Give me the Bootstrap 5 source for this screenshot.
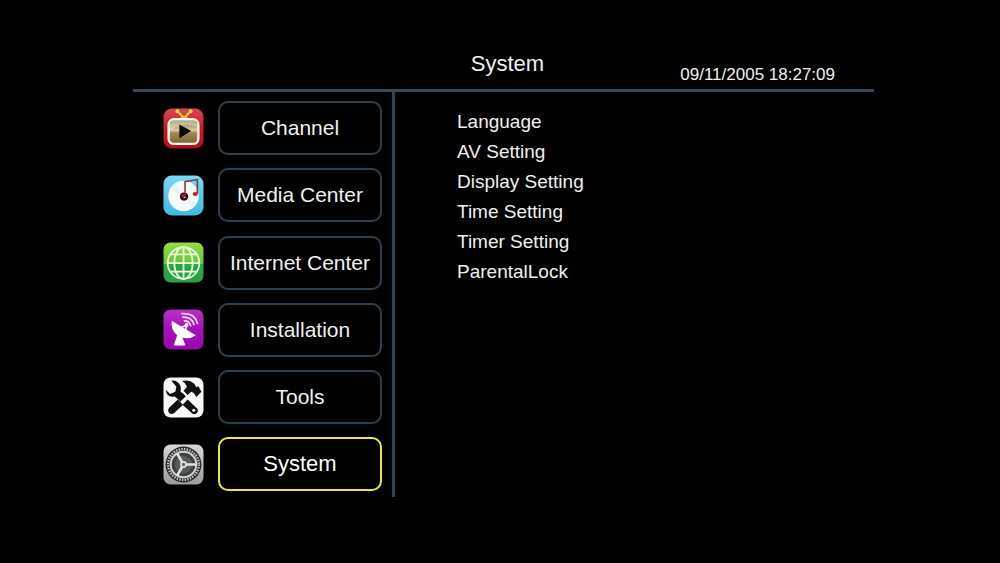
<!DOCTYPE html>
<html lang="en">
<head>
<meta charset="utf-8">
<meta name="viewport" content="width=device-width, initial-scale=1">
<title>System</title>
<link href="https://cdn.jsdelivr.net/npm/bootstrap@5.3.0/dist/css/bootstrap.min.css" rel="stylesheet">
<style>
  body { background: #000; color: #f0f0f0; font-family: "Liberation Sans", Arial, sans-serif; }
  .screen { padding: 50px 12.6% 0 13.3%; }
  .screen-head { border-bottom: 3px solid #344a5a; height: 42px; }
  .screen-title { font-size: 22px; line-height: 28px; padding-left: 8px; }
  .clock { font-size: 17px; line-height: 20px; padding: 15px 39px 0 0; }
  .side-menu { border-right: 3px solid #2e4250; padding: 9px 10px 6px 30px; min-height: 72vh; }
  .entry { gap: 14px; }
  .entry svg { width: 41px; height: 41px; flex: none; }
  .menu-btn { width: 164px; height: 54px; padding: 0; border: 2px solid #2b404b; border-radius: 10px; color: #f0f0f0; font-size: 21px; line-height: 28px; }
  .menu-btn:hover { color: #fff; border-color: #5b7685; }
  .menu-btn.active { background: #000; border-color: #e9e647; color: #fff; font-size: 22px; }
  .options { padding: 15px 0 0 62px; font-size: 19px; line-height: 30px; }
  .options a { color: #f0f0f0; text-decoration: none; }
</style>
</head>
<body>
<main class="screen">
  <header class="screen-head row g-0">
    <h1 class="screen-title col-4 offset-4 text-center fw-normal mb-0">System</h1>
    <time class="clock col-4 text-end text-nowrap" datetime="2005-11-09T18:27:09">09/11/2005 18:27:09</time>
  </header>
  <div class="d-flex">
    <nav class="side-menu d-flex flex-column justify-content-between" aria-label="Main menu">
      <div class="entry d-flex align-items-center">
        <svg viewBox="0 0 40 40" aria-hidden="true">
          <defs>
            <linearGradient id="red" x2="0" y2="1"><stop stop-color="#d84852"/><stop offset=".45" stop-color="#c91d2b"/><stop offset="1" stop-color="#b90c1d"/></linearGradient>
            <linearGradient id="sand" x2="0" y2="1"><stop stop-color="#777044"/><stop offset=".45" stop-color="#d5cca0"/><stop offset=".55" stop-color="#a18a55"/><stop offset="1" stop-color="#77613a"/></linearGradient>
          </defs>
          <rect x=".5" y=".5" width="39" height="39" rx="8" fill="url(#red)"/>
          <path d="M14 3l6.500 7L27 3" fill="none" stroke="#f2c63a" stroke-width="2.200"/>
          <circle cx="14" cy="3" r="1.900" fill="#ffd84b"/><circle cx="27" cy="3" r="1.900" fill="#ffd84b"/>
          <path d="M16 10q4.500-5 9 0z" fill="#f5c52e"/>
          <rect x="5.500" y="11" width="29" height="24" rx="5" fill="url(#sand)" stroke="#fff7ee" stroke-width="2.300"/>
          <path d="M7 23Q17 13 33 18V15Q32 12.500 29 12.500H10Q7 13 7 16z" fill="#eee6c5" opacity=".5"/>
          <path d="M16 16v13.500L27.500 22.500z" fill="#080705"/>
        </svg>
        <button type="button" class="btn menu-btn">Channel</button>
      </div>
      <div class="entry d-flex align-items-center">
        <svg viewBox="0 0 40 40" aria-hidden="true">
          <defs><linearGradient id="sky" x2="0" y2="1"><stop stop-color="#75dbf3"/><stop offset="1" stop-color="#41b9df"/></linearGradient></defs>
          <rect x=".5" y=".5" width="39" height="39" rx="8" fill="url(#sky)"/>
          <circle cx="20" cy="20.500" r="14.800" fill="#f8fafa"/>
          <path d="M20 20.500L7 13.500A15 15 0 0 1 12 8zM20 20.500l13 7a15 15 0 0 1-5 5.500z" fill="#edf3f4"/>
          <circle cx="20.500" cy="21" r="4" fill="#211015"/><circle cx="21" cy="21.500" r="1.100" fill="#eee"/>
          <path d="M21.500 20V6.500L33.500 4.500V18" fill="none" stroke="#92303c" stroke-width="1.500"/>
          <ellipse cx="20" cy="20" rx="2.300" ry="1.800" fill="#a3182b"/><ellipse cx="31.500" cy="18.500" rx="2.500" ry="2" fill="#c31b31"/>
        </svg>
        <button type="button" class="btn menu-btn">Media Center</button>
      </div>
      <div class="entry d-flex align-items-center">
        <svg viewBox="0 0 40 40" aria-hidden="true">
          <defs><linearGradient id="leaf" x2="0" y2="1"><stop stop-color="#9adc48"/><stop offset=".54" stop-color="#62c53b"/><stop offset=".55" stop-color="#25a947"/><stop offset="1" stop-color="#2c9e48"/></linearGradient></defs>
          <rect x=".5" y=".5" width="39" height="39" rx="7" fill="url(#leaf)"/>
          <g fill="none" stroke="#effbd9" stroke-width="1.700">
            <circle cx="20" cy="20.500" r="15.500"/><ellipse cx="20" cy="20.500" rx="9" ry="15.500"/>
            <path d="M20 5v31M4.500 20.500h31M7.500 12h25M7.500 29h25"/>
          </g>
        </svg>
        <button type="button" class="btn menu-btn">Internet Center</button>
      </div>
      <div class="entry d-flex align-items-center">
        <svg viewBox="0 0 40 40" aria-hidden="true">
          <defs><linearGradient id="violet" x2="0" y2="1"><stop stop-color="#b631c5"/><stop offset=".5" stop-color="#a411b7"/><stop offset="1" stop-color="#970aa9"/></linearGradient></defs>
          <rect x=".5" y=".5" width="39" height="39" rx="7" fill="url(#violet)"/>
          <path d="M8.500 11.500L32 25.500Q24 31 15 26.500Q7 21 8.500 11.500z" fill="#fff"/>
          <path d="M14 25l5 3 3 7.500H10.500z" fill="#fff"/>
          <path d="M18 18l5-2.500-1 5" fill="none" stroke="#fff" stroke-width="1.500"/><circle cx="23" cy="15.500" r="1.900" fill="#fff"/>
          <g fill="none" stroke="#f7dcfa" stroke-width="1.700" stroke-linecap="round"><path d="M21 11.500Q26 11.500 27 16.500M19.500 8Q28.500 8 30 15M18.500 4.500Q31 3.500 33.500 14"/></g>
        </svg>
        <button type="button" class="btn menu-btn">Installation</button>
      </div>
      <div class="entry d-flex align-items-center">
        <svg viewBox="0 0 40 40" aria-hidden="true">
          <rect x=".5" y=".5" width="39" height="39" rx="7" fill="#f7f7f7"/>
          <g fill="#101010">
            <path d="M8 3.500Q15 3 17 9q1 3 0 5l5 5-5 5-5.500-5Q4 21 2.500 12.500l4.500 4 5-2 1-5z"/>
            <path d="M14.500 22l5 5-8.500 8q-3 2-5 0t0-5z"/>
            <path d="M18.500 4q7-2 12 2.500l2 3.500 2-1 3 5.500-5 5-2.500-4-2.500-1-3.500 3-4-4 3.500-4Q22 5.500 18.500 4z"/>
            <path d="M19 27l5-5 9 8.500q2 2.500 0 4.500t-4.500 0.500z"/>
            <path d="M22 18.500l-2.500 2.500-3-3 2.500-2.500z"/>
          </g>
          <circle cx="30" cy="32.500" r="1.500" fill="#eee"/>
        </svg>
        <button type="button" class="btn menu-btn">Tools</button>
      </div>
      <div class="entry d-flex align-items-center">
        <svg viewBox="0 0 40 40" aria-hidden="true">
          <defs><linearGradient id="steel" x2="0" y2="1"><stop stop-color="#d8d8d6"/><stop offset="1" stop-color="#999b9a"/></linearGradient></defs>
          <rect x=".5" y=".5" width="39" height="39" rx="7" fill="url(#steel)"/>
          <circle cx="20" cy="20" r="17.500" fill="#292b2b"/>
          <circle cx="20" cy="20" r="15" fill="none" stroke="#c8cac8" stroke-width="2.400" stroke-dasharray="1.400 1.218"/>
          <circle cx="20" cy="20" r="12.500" fill="#3d4140" stroke="#d4d5d3" stroke-width="1.900"/>
          <circle cx="20" cy="20" r="8.500" fill="#565b59"/>
          <path d="M20 20h12.500M20 20L13.750 9.200M20 20l-6.250 10.800" stroke="#e2e3e1" stroke-width="2.500"/>
          <circle cx="20" cy="20" r="2.500" fill="#666" stroke="#e2e3e1" stroke-width="1.600"/>
        </svg>
        <button type="button" class="btn menu-btn active" aria-current="page">System</button>
      </div>
    </nav>
    <ul class="options list-unstyled mb-0">
      <li><a href="#language">Language</a></li>
      <li><a href="#av">AV Setting</a></li>
      <li><a href="#display">Display Setting</a></li>
      <li><a href="#time">Time Setting</a></li>
      <li><a href="#timer">Timer Setting</a></li>
      <li><a href="#lock">ParentalLock</a></li>
    </ul>
  </div>
</main>
<script src="https://cdn.jsdelivr.net/npm/bootstrap@5.3.0/dist/js/bootstrap.bundle.min.js"></script>
</body>
</html>
